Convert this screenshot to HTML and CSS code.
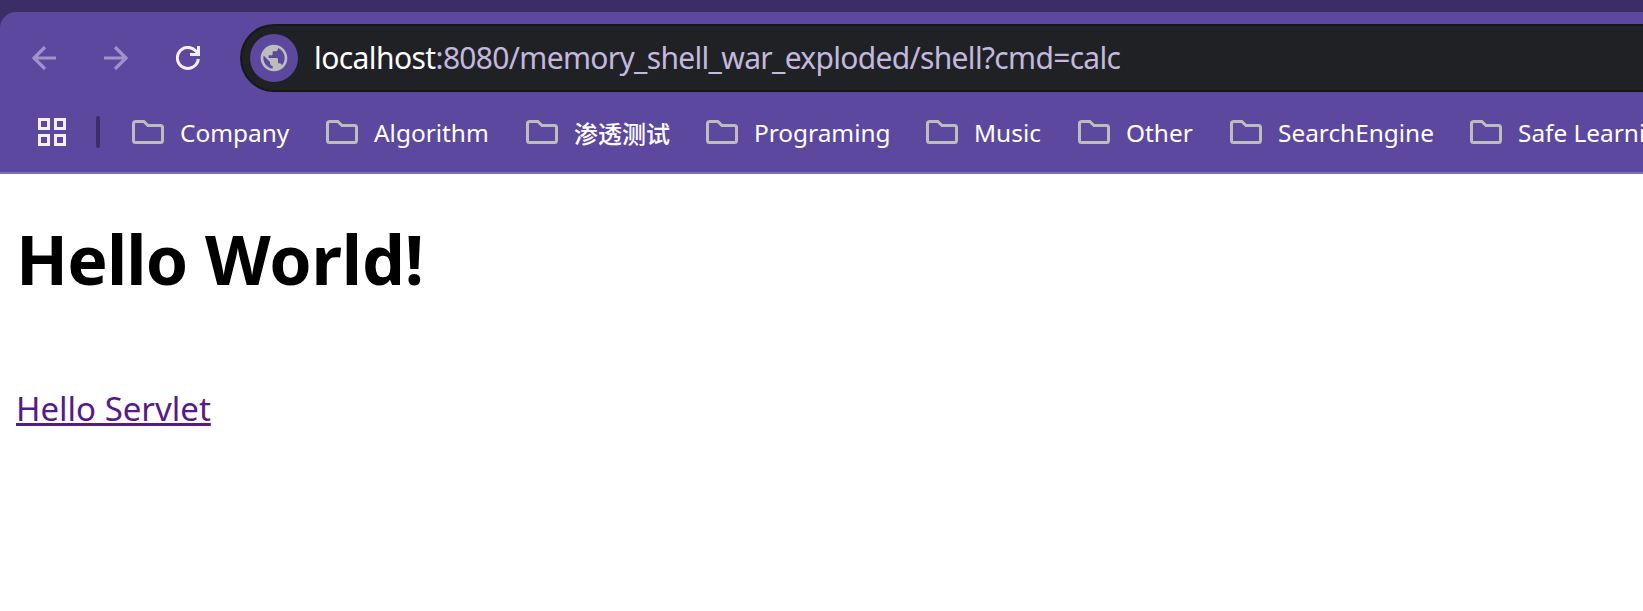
FILE: index.html
```html
<!DOCTYPE html>
<html lang="en">
<head>
<meta charset="utf-8">
<title>Hello World!</title>
<link rel="stylesheet" href="styles.css">
</head>
<body>
<svg class="defs" width="0" height="0" aria-hidden="true">
  <symbol id="folder" viewBox="0 0 32 24"><path d="M4 1.5H11.8L16 5.5H28.5Q30.5 5.5 30.5 7.500V20.5Q30.5 22.5 28.5 22.5H3.5Q1.5 22.5 1.5 20.5V3.5Q1.5 1.5 4 1.5Z" fill="none" stroke="#bdbdbd" stroke-width="3"/></symbol>
</svg>
<header class="chrome">
  <div class="toolbar">
    <svg class="nav dim" width="24" height="24" viewBox="0 0 24 24"><path d="M24 12H2M13 1L2 12L13 23"/></svg>
    <svg class="nav dim" width="24" height="24" viewBox="0 0 24 24"><path d="M0 12H22M11 1L22 12L11 23"/></svg>
    <svg class="nav" width="24" height="24" viewBox="0 0 24 24"><path d="M22.3 13A10.5 10.5 0 1 1 19.6 4.8L22.5 8M22.5 0V8.5H14"/></svg>
    <div class="omnibox">
      <span class="site">
        <svg width="32" height="32" viewBox="0 0 24 24"><path fill="#bdbdbd" d="M12 2C6.48 2 2 6.48 2 12s4.480 10 10 10 10-4.480 10-10S17.520 2 12 2zm-1 17.930c-3.950-.490-7-3.850-7-7.930 0-.620.080-1.210.210-1.790L9 15v1c0 1.100.900 2 2 2v1.930zm6.900-2.540c-.260-.810-1-1.390-1.900-1.390h-1v-3c0-.550-.450-1-1-1H8v-2h2c.550 0 1-.450 1-1V7h2c1.100 0 2-.900 2-2v-.410c2.930 1.190 5 4.060 5 7.410 0 2.080-.800 3.970-2.100 5.390z"/></svg>
      </span>
      <span class="url"><span class="host">localhost</span><span class="path">:8080/memory_shell_war_exploded/shell?cmd=calc</span></span>
    </div>
  </div>
  <nav class="bookmarks">
    <svg class="apps" width="28" height="28" viewBox="0 0 28 28"><path d="M1.500 1.500H10.500V10.500H1.500ZM17.500 1.500H26.500V10.500H17.500ZM1.500 17.500H10.500V26.500H1.500ZM17.500 17.500H26.500V26.500H17.500Z"/></svg>
    <span class="divider"></span>
    <a class="bm company"><svg width="32" height="24"><use href="#folder"/></svg><span>Company</span></a>
    <a class="bm algorithm"><svg width="32" height="24"><use href="#folder"/></svg><span>Algorithm</span></a>
    <a class="bm pentest"><svg width="32" height="24"><use href="#folder"/></svg><span>渗透测试</span></a>
    <a class="bm programing"><svg width="32" height="24"><use href="#folder"/></svg><span>Programing</span></a>
    <a class="bm music"><svg width="32" height="24"><use href="#folder"/></svg><span>Music</span></a>
    <a class="bm other"><svg width="32" height="24"><use href="#folder"/></svg><span>Other</span></a>
    <a class="bm search"><svg width="32" height="24"><use href="#folder"/></svg><span>SearchEngine</span></a>
    <a class="bm safe"><svg width="32" height="24"><use href="#folder"/></svg><span>Safe Learning</span></a>
  </nav>
</header>
<main class="page">
  <h1 class="title"><span class="first">Hello</span> World!</h1>
  <a class="link">Hello Servlet</a>
</main>
</body>
</html>
```
FILE: styles.css
```css
* { box-sizing: border-box; }
body { margin: 0; height: 611px; overflow: hidden; background: #fff; font-family: "Noto Sans", "Noto Sans CJK SC", sans-serif; }
svg { display: block; flex: none; }
.defs { position: absolute; }
.chrome { height: 174px; padding-top: 12px; background: #3b2e66; }
.toolbar { display: flex; height: 92px; padding: 12px 0 0 32px; background: #5d489f; border-top-left-radius: 16px; }
.nav { margin: 22px 48px 0 0; fill: none; stroke: #f3f1f8; stroke-width: 3; }
.nav.dim { stroke: #a092cb; stroke-width: 3.2; }
.omnibox { display: flex; align-items: center; flex: 1; height: 68px; margin-left: -8px; padding-left: 8px; background: #202124; border: 2px solid #17181a; border-right: 0; border-radius: 34px 0 0 34px; white-space: nowrap; }
.site { display: flex; align-items: center; justify-content: center; flex: none; width: 48px; height: 48px; border-radius: 50%; background: #5d489f; }
.url { margin-left: 16px; font-size: 30px; line-height: 40px; color: #c3b9de; }
.host { color: #fff; letter-spacing: -0.58px; }
.path { letter-spacing: -0.68px; }
.bookmarks { display: flex; height: 70px; padding-left: 38px; background: #5d489f; border-bottom: 2px solid #8170b4; overflow: hidden; }
.apps { margin-top: 14px; fill: none; stroke: #f3f1f8; stroke-width: 3; }
.divider { flex: none; width: 4px; height: 32px; margin: 12px 32px 0 30px; border-radius: 2px; background: #3b2e66; }
.bm { display: flex; flex: none; gap: 16px; padding-top: 16px; color: #fff; font-size: 24.4px; line-height: 32px; white-space: nowrap; }
.bm span { margin-top: -3px; }
.company { width: 194px; }
.algorithm { width: 200px; }
.pentest { width: 180px; font-size: 24px; font-weight: 500; }
.pentest span { margin-top: -2px; }
.programing { width: 220px; }
.music { width: 152px; }
.other { width: 152px; }
.search { width: 240px; }
.page { padding: 40px 16px; }
.title { margin: 0; font-size: 68px; line-height: 90px; font-weight: 700; color: #000; white-space: nowrap; letter-spacing: -0.15px; }
.first { letter-spacing: -0.85px; }
.link { display: inline-block; margin-top: 83px; font-size: 33px; line-height: 44px; color: #551a8b; text-decoration: underline; text-decoration-thickness: 3px; text-underline-offset: 2px; text-decoration-skip-ink: none; }
```
